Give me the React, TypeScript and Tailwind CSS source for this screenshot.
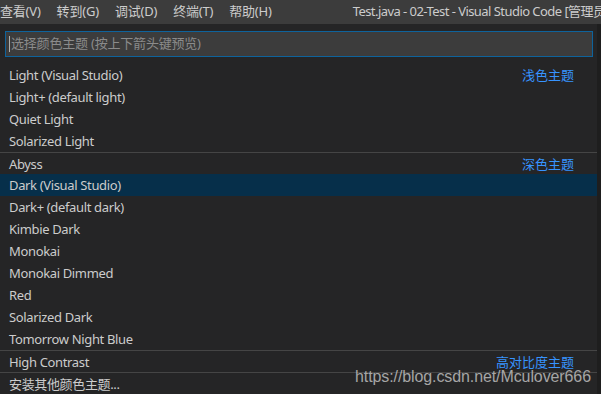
import React from "react";

const font = { fontFamily: '"Noto Sans", "Noto Sans CJK SC", sans-serif' };

type Item = { label: string; group?: string; sep?: boolean; active?: boolean };

const items: Item[] = [
  { label: "Light (Visual Studio)", group: "浅色主题" },
  { label: "Light+ (default light)" },
  { label: "Quiet Light" },
  { label: "Solarized Light" },
  { label: "Abyss", group: "深色主题", sep: true },
  { label: "Dark (Visual Studio)", active: true },
  { label: "Dark+ (default dark)" },
  { label: "Kimbie Dark" },
  { label: "Monokai" },
  { label: "Monokai Dimmed" },
  { label: "Red" },
  { label: "Solarized Dark" },
  { label: "Tomorrow Night Blue" },
  { label: "High Contrast", group: "高对比度主题", sep: true },
  { label: "安装其他颜色主题...", sep: true },
];

function App() {
  return (
    <div className="w-[601px] h-[394px] bg-[#1e1e1e] overflow-hidden relative text-[13px] text-[#cccccc]" style={font}>
      {/* title bar */}
      <div className="h-6 bg-[#3c3c3c] flex items-center whitespace-nowrap">
        <div className="flex gap-[16px] tracking-[-0.2px]">
          <span>查看(V)</span>
          <span>转到(G)</span>
          <span>调试(D)</span>
          <span>终端(T)</span>
          <span>帮助(H)</span>
        </div>
        <span className="ml-[81px] tracking-[-0.55px]">Test.java - 02-Test - Visual Studio Code [管理员]</span>
      </div>

      {/* quick pick */}
      <div className="w-[597px] h-[370px] bg-[#252526]">
        <div className="pt-[7px] pl-[5px] pr-[4px] pb-[7px]">
          <div className="h-[26px] bg-[#3c3c3c] border border-[#0e639c] flex items-center pl-[3px]">
            <span className="w-px h-[16px] bg-[#aeafad] mr-px" />
            <span className="text-[#8b8b8b] tracking-[-0.2px]">选择颜色主题 (按上下箭头键预览)</span>
          </div>
        </div>
        <div className="flex flex-col">
          {items.map((it) => (
            <div
              key={it.label}
              className={`h-[22px] flex items-center justify-between pt-[2px] pl-[9px] pr-[23px] whitespace-nowrap ${
                it.sep ? "border-t border-[#454545]" : ""
              } ${it.active ? "bg-[#062f4a]" : ""}`}
            >
              <span className="tracking-[-0.35px]">{it.label}</span>
              {it.group && <span className="text-[#3794ff]">{it.group}</span>}
            </div>
          ))}
        </div>
      </div>

      {/* watermark */}
      <div
        className="absolute left-[355px] top-[365px] text-[16px] tracking-[-0.1px] text-[#b4b4b4] opacity-90"
        style={{ fontFamily: '"Liberation Sans", Arial, sans-serif' }}
      >
        https://blog.csdn.net/Mculover666
      </div>
    </div>
  );
}

export default App;
